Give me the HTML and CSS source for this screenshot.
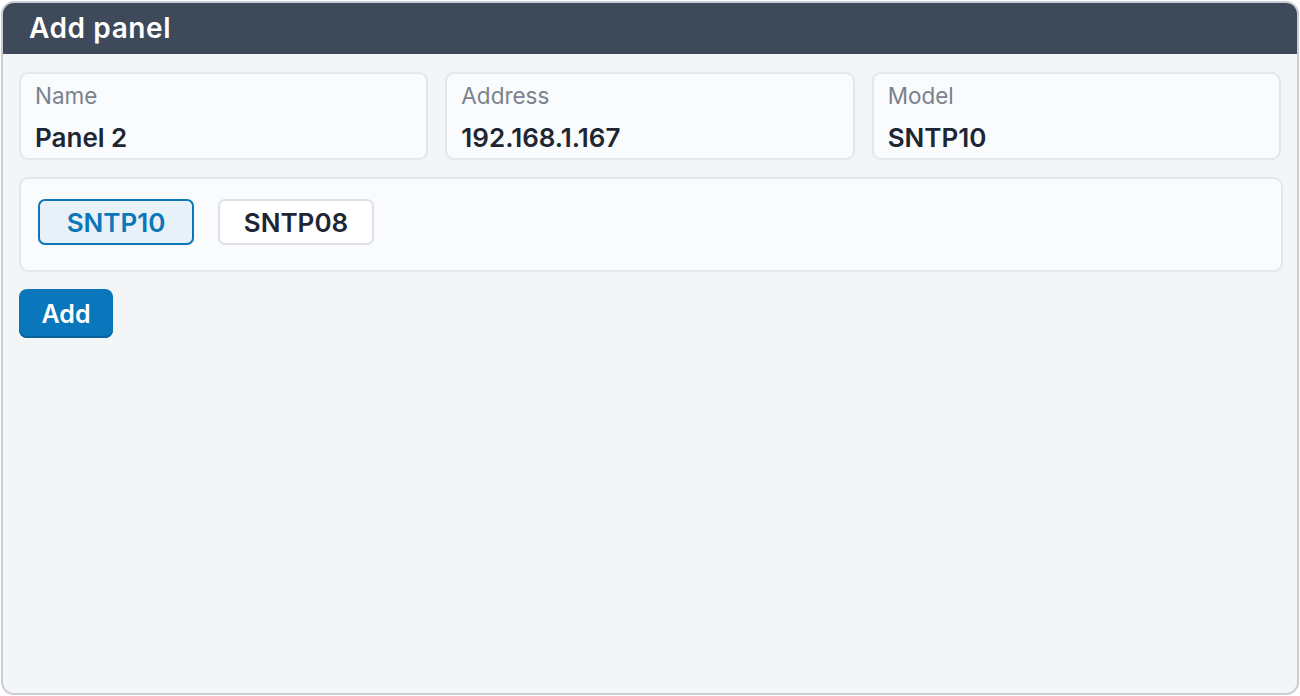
FILE: index.html
```html
<!DOCTYPE html>
<html lang="en">
<head>
<meta charset="utf-8">
<title>Add panel</title>
<link rel="stylesheet" href="styles.css">
</head>
<body>
<div class="window">
  <div class="header">Add panel</div>
  <div class="content">
    <div class="fields">
      <div class="field">
        <div class="label">Name</div>
        <div class="value">Panel 2</div>
      </div>
      <div class="field">
        <div class="label">Address</div>
        <div class="value">192.168.1.167</div>
      </div>
      <div class="field">
        <div class="label">Model</div>
        <div class="value">SNTP10</div>
      </div>
    </div>
    <div class="models">
      <button class="model selected">SNTP10</button>
      <button class="model">SNTP08</button>
    </div>
    <div class="actions">
      <button class="add">Add</button>
    </div>
  </div>
</div>
</body>
</html>
```
FILE: styles.css
```css
* { box-sizing: border-box; }
html, body { margin: 0; padding: 0; background: #ffffff; }
body {
  font-family: "Inter", "Noto Sans", "Liberation Sans", sans-serif;
  color: #1f2937;
}
.window {
  margin: 1px;
  width: 1298px;
  height: 694px;
  border: 2px solid #c8cdd5;
  border-radius: 13px;
  background: #f3f5f7;
  overflow: hidden;
  display: flex;
  flex-direction: column;
}
.header {
  height: 51px;
  background: #3e4a59;
  color: #ffffff;
  font-size: 28px;
  font-weight: 600;
  line-height: 50px;
  padding-left: 26px;
  letter-spacing: 0.6px;
}
.content {
  padding: 18px 15px 0 16px;
  display: flex;
  flex-direction: column;
  align-items: flex-start;
}
.fields {
  width: 1262px;
  display: grid;
  grid-template-columns: 1fr 1fr 1fr;
  gap: 17px;
}
.field {
  height: 88px;
  border: 2px solid #e2e7ec;
  border-radius: 9px;
  background: #f9fbfc;
  padding: 9px 14px 0 14px;
}
.label {
  font-size: 22.5px;
  line-height: 26px;
  color: #7b828c;
}
.value {
  margin-top: 14px;
  font-size: 26px;
  line-height: 30px;
  font-weight: 600;
  color: #1e2633;
}
.models {
  margin-top: 17px;
  width: 1264px;
  height: 95px;
  border: 2px solid #e2e7ec;
  border-radius: 9px;
  background: #f9fbfc;
  padding: 20px 17px 0 17px;
  display: flex;
  gap: 24px;
  align-items: flex-start;
}
.model {
  width: 156px;
  height: 46px;
  border: 2px solid #dde1e7;
  border-radius: 7px;
  background: #ffffff;
  color: #1e2633;
  font-family: inherit;
  font-size: 26px;
  font-weight: 600;
  padding: 0;
}
.model.selected {
  border-color: #0b77b8;
  background: #e8f0f8;
  color: #0b77b8;
}
.actions {
  margin-top: 17px;
}
.add {
  width: 94px;
  height: 49px;
  border: none;
  border-radius: 8px;
  background: #0a76bc;
  box-shadow: inset 0 -2px 0 #08629c;
  color: #ffffff;
  font-family: inherit;
  font-size: 25px;
  font-weight: 600;
  padding: 0;
}
```
